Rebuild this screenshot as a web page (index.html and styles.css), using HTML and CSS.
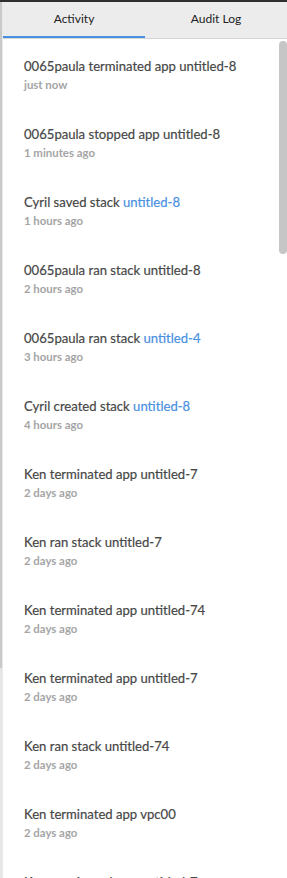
FILE: index.html
```html
<!DOCTYPE html>
<html lang="en">
<head>
    <meta charset="UTF-8">
    <meta name="viewport" content="width=device-width, initial-scale=1.0">
    <title>Activity</title>
    <link rel="stylesheet" href="styles.css">
</head>
<body>
    <div class="topbar"></div>
    <div class="frame">
        <div class="edge">
            <div class="edge-dark"></div>
            <div class="edge-light"></div>
        </div>
        <div class="panel">
            <div class="tabs">
                <div class="tab active">Activity</div>
                <div class="tab">Audit Log</div>
            </div>
            <div class="feed">
                <div class="scroll-thumb"></div>
                <div class="item">
                    <div class="title">0065paula terminated app untitled-8</div>
                    <div class="time">just now</div>
                </div>
                <div class="item">
                    <div class="title">0065paula stopped app untitled-8</div>
                    <div class="time">1 minutes ago</div>
                </div>
                <div class="item">
                    <div class="title">Cyril saved stack <a class="link">untitled-8</a></div>
                    <div class="time">1 hours ago</div>
                </div>
                <div class="item">
                    <div class="title">0065paula ran stack untitled-8</div>
                    <div class="time">2 hours ago</div>
                </div>
                <div class="item">
                    <div class="title">0065paula ran stack <a class="link">untitled-4</a></div>
                    <div class="time">3 hours ago</div>
                </div>
                <div class="item">
                    <div class="title">Cyril created stack <a class="link">untitled-8</a></div>
                    <div class="time">4 hours ago</div>
                </div>
                <div class="item">
                    <div class="title">Ken terminated app untitled-7</div>
                    <div class="time">2 days ago</div>
                </div>
                <div class="item">
                    <div class="title">Ken ran stack untitled-7</div>
                    <div class="time">2 days ago</div>
                </div>
                <div class="item">
                    <div class="title">Ken terminated app untitled-74</div>
                    <div class="time">2 days ago</div>
                </div>
                <div class="item">
                    <div class="title">Ken terminated app untitled-7</div>
                    <div class="time">2 days ago</div>
                </div>
                <div class="item">
                    <div class="title">Ken ran stack untitled-74</div>
                    <div class="time">2 days ago</div>
                </div>
                <div class="item">
                    <div class="title">Ken terminated app vpc00</div>
                    <div class="time">2 days ago</div>
                </div>
                <div class="item">
                    <div class="title">Ken terminated app untitled-7</div>
                    <div class="time">2 days ago</div>
                </div>
            </div>
        </div>
    </div>
</body>
</html>
```

FILE: styles.css
```css
body {
    margin: 0;
    height: 100vh;
    overflow: hidden;
    font-family: Lato, "Open Sans", sans-serif;
    background-color: #ffffff;
    display: flex;
    flex-direction: column;
}

.topbar {
    height: 2px;
    background-color: #2e2e2e;
    flex-shrink: 0;
}

.frame {
    flex: 1;
    display: flex;
    min-height: 0;
}

.edge {
    width: 2px;
    display: flex;
    flex-direction: column;
}

.edge-dark {
    height: 666px;
    background-color: #c9c9c9;
}

.edge-light {
    flex: 1;
    background-color: #e6e6e6;
}

.panel {
    flex: 1;
    border-left: 1px solid #e9e9e9;
    display: flex;
    flex-direction: column;
    min-width: 0;
}

.tabs {
    display: flex;
    background-color: #ececec;
    border-bottom: 1px solid #d6d6d6;
    flex-shrink: 0;
}

.tab {
    flex: 1;
    height: 34px;
    line-height: 34px;
    text-align: center;
    font-size: 12px;
    color: #222;
    border-bottom: 2px solid transparent;
}

.tab.active {
    border-bottom-color: #4a90e2;
}

.feed {
    position: relative;
    flex: 1;
    overflow: hidden;
}

/* fake scrollbar thumb */
.scroll-thumb {
    position: absolute;
    top: 2px;
    right: 0;
    width: 8px;
    height: 213px;
    border-radius: 4px;
    background-color: #c6c6c6;
}

.item {
    padding: 18px 20px 15px 21px;
}

.title {
    font-size: 13.1px;
    line-height: 18px;
    color: #474747;
    white-space: nowrap;
    -webkit-text-stroke: 0.2px #474747;
}

.link {
    color: #4a90e2;
    -webkit-text-stroke: 0.2px #4a90e2;
}

.time {
    margin-top: 3px;
    font-size: 11.4px;
    line-height: 14px;
    font-weight: bold;
    color: #a5a5a5;
}
```
